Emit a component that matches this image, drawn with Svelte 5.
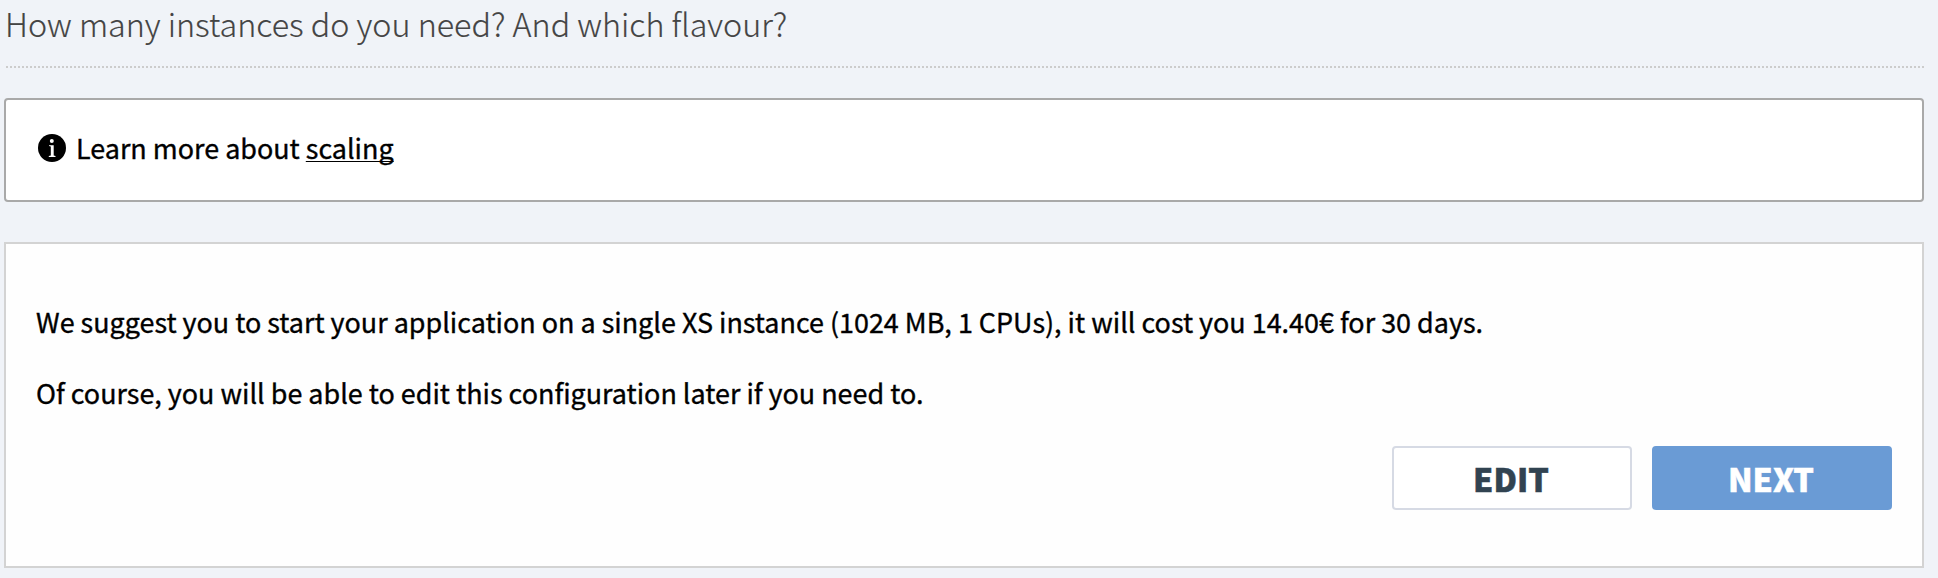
<script>
  const plan = { size: 'XS', memory: 1024, cpus: 1, price: '14.40€', days: 30 };
</script>

<main>
  <h1>How many instances do you need? And which flavour?</h1>

  <section class="notice">
    <svg class="info" viewBox="0 0 28 28" aria-hidden="true">
      <circle cx="14" cy="14" r="14" />
      <circle class="mark" cx="13.8" cy="7.1" r="2" />
      <path class="mark" d="M11 11.2h4.7v10.4l1.8.5v.9H10.8v-.9l2-.5v-9l-1.8-.5z" />
    </svg>
    <p>Learn more about <a href="#scaling">scaling</a></p>
  </section>

  <section class="card">
    <p class="cost">We suggest you to start your application on a single {plan.size} instance ({plan.memory} MB, {plan.cpus} CPUs), it will cost you {plan.price} for {plan.days} days.</p>
    <p class="later">Of course, you will be able to edit this configuration later if you need to.</p>
    <div class="actions">
      <button class="edit">EDIT</button>
      <button class="next">NEXT</button>
    </div>
  </section>
</main>

<style>
  :global(body) {
    background: #f0f3f8;
  }

  main {
    box-sizing: border-box;
    height: 578px;
    padding: 0 14px 10px 4px;
    font-family: "Noto Sans CJK SC", "Noto Sans", sans-serif;
    color: #000;
    white-space: nowrap;
    overflow: hidden;
  }

  h1 {
    box-sizing: border-box;
    height: 68px;
    margin: 0 0 30px 2px;
    border-bottom: 2px dotted #ccc;
    font-size: 32.25px;
    line-height: 46px;
    font-weight: 300;
    text-indent: -1px;
    color: #444;
    -webkit-text-stroke: 0.15px currentColor;
  }

  p {
    margin: 0;
    font-size: 26.93px;
    line-height: 39px;
    -webkit-text-stroke: 0.35px currentColor;
  }

  .notice {
    box-sizing: border-box;
    display: flex;
    align-items: flex-start;
    gap: 10px;
    height: 104px;
    margin-bottom: 40px;
    padding: 28px 32px 0;
    border: 2px solid #a9a9a9;
    border-radius: 4px;
    background: #fff;
  }

  .info {
    width: 28px;
    height: 28px;
    margin-top: 6px;
  }

  .mark {
    fill: #fff;
  }

  a {
    color: inherit;
    text-decoration-thickness: 1px;
    text-underline-offset: 2px;
    text-decoration-skip-ink: none;
  }

  .card {
    box-sizing: border-box;
    height: 326px;
    padding: 58px 30px 0;
    border: 2px solid #d3d3d3;
    background: #fefefe;
  }

  .later {
    margin-top: 32px;
  }

  .actions {
    display: flex;
    justify-content: flex-end;
    gap: 20px;
    margin-top: 34px;
  }

  button {
    box-sizing: border-box;
    width: 240px;
    height: 64px;
    padding: 0 2px 0 0;
    border: 2px solid #d6dae4;
    border-radius: 4px;
    background: #fff;
    color: #314351;
    font-family: inherit;
    font-size: 32.25px;
    line-height: 46px;
    font-weight: 900;
    -webkit-text-stroke: 0.5px currentColor;
  }

  .next {
    border-color: #6a9bd5;
    background: #6a9bd5;
    color: #fff;
  }
</style>
